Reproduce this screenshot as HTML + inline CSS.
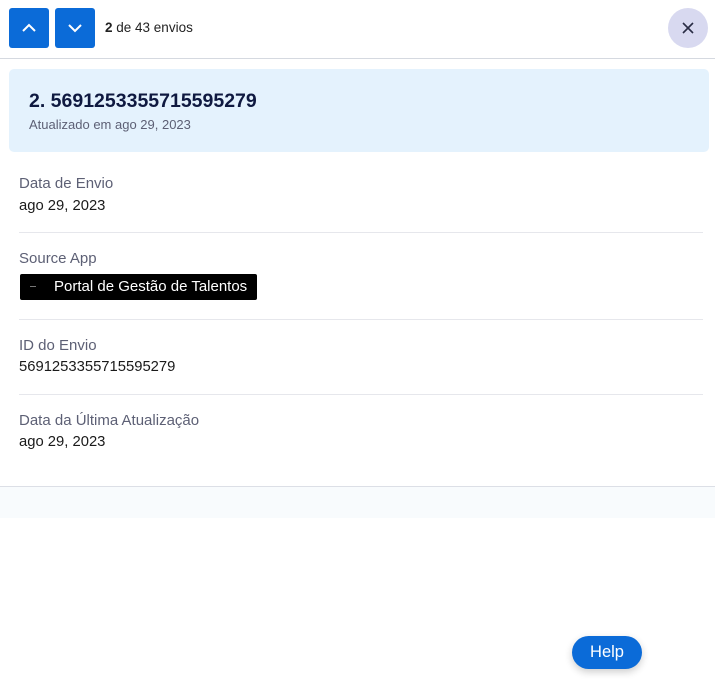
<!DOCTYPE html>
<html><head><style>
body{margin:0;width:715px;height:679px;background:#fff;font-family:"Liberation Sans",sans-serif;position:relative;overflow:hidden}
.a{position:absolute}
.btn{position:absolute;top:8px;width:40px;height:40px;background:#0b6bd8;border-radius:3px}
.lbl{position:absolute;left:19px;font-size:15px;color:#5d6075}
.val{position:absolute;left:19px;font-size:14.8px;color:#1a1a1a}
.sep{position:absolute;left:19px;width:684px;height:1px;background:#e6e7ec}
</style></head><body>
<div class="btn" style="left:9px"><svg width="40" height="40"><path d="M14 23l6-6 6 6" stroke="#fff" stroke-width="2" fill="none"/></svg></div>
<div class="btn" style="left:55px"><svg width="40" height="40"><path d="M14 17l6 6 6-6" stroke="#fff" stroke-width="2" fill="none"/></svg></div>
<div class="a" style="left:105px;top:20px;font-size:13.5px;color:#222"><b>2</b> de 43 envios</div>
<div class="a" style="left:668px;top:8px;width:40px;height:40px;border-radius:50%;background:#d8d9f0"><svg width="40" height="40"><path d="M15 15l10 10M25 15l-10 10" stroke="#2a2d45" stroke-width="1.6"/></svg></div>
<div class="a" style="left:0;top:58px;width:715px;height:1px;background:#d5d9e0"></div>
<div class="a" style="left:9px;top:69px;width:700px;height:83px;background:#e4f2fd;border-radius:5px"></div>
<div class="a" style="left:29px;top:90px;font-size:19.5px;font-weight:bold;color:#0f1940">2. 5691253355715595279</div>
<div class="a" style="left:29px;top:117px;font-size:13px;color:#5d6075">Atualizado em ago 29, 2023</div>
<div class="lbl" style="top:175px">Data de Envio</div>
<div class="val" style="top:198px">ago 29, 2023</div>
<div class="sep" style="top:232px"></div>
<div class="lbl" style="top:250px">Source App</div>
<div class="a" style="left:20px;top:274px;width:237px;height:26px;background:#000;border-radius:2px"><div class="a" style="left:10px;top:12px;width:6px;height:1px;background:#777"></div><div class="a" style="left:34px;top:4px;color:#fff;font-size:15px">Portal de Gestão de Talentos</div></div>
<div class="sep" style="top:319px"></div>
<div class="lbl" style="top:337px">ID do Envio</div>
<div class="val" style="top:359px">5691253355715595279</div>
<div class="sep" style="top:394px"></div>
<div class="lbl" style="top:412px">Data da Última Atualização</div>
<div class="val" style="top:434px">ago 29, 2023</div>
<div class="a" style="left:0;top:486px;width:715px;height:1px;background:#dcdfe6"></div>
<div class="a" style="left:0;top:487px;width:715px;height:31px;background:#f8fbfd"></div>
<div class="a" style="left:572px;top:636px;width:70px;height:33px;border-radius:17px;background:#0b6bd8;box-shadow:0 3px 8px rgba(0,0,0,.2);color:#fff;font-size:16.5px;text-align:center;line-height:33px">Help</div>
</body></html>
